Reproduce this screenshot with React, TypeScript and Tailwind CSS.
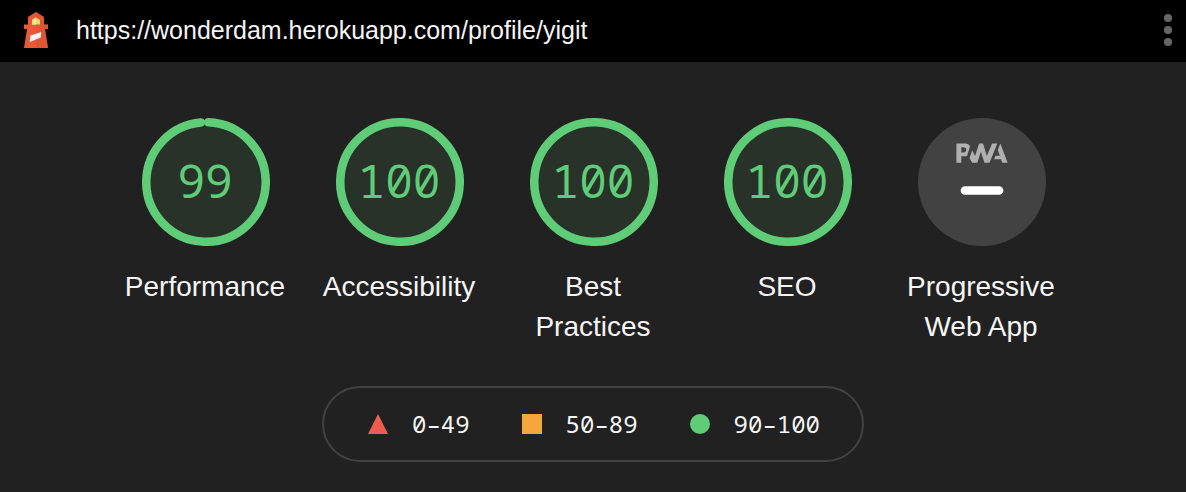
import React from "react";

type Category = { label: string; score: number };

const categories: Category[] = [
  { label: "Performance", score: 99 },
  { label: "Accessibility", score: 100 },
  { label: "Best Practices", score: 100 },
  { label: "SEO", score: 100 },
];

const RADIUS = 56;
const CIRCUMFERENCE = 2 * Math.PI * RADIUS;

function LighthouseLogo() {
  return (
    <svg className="h-9 w-6 shrink-0" viewBox="0 0 24 36" aria-hidden="true">
      <path fill="#e8593a" d="M12 0l8 5v7.5h4V17h-3l3 19H0l3-19H0v-4.500h4V5z" />
      <path fill="#d4502f" fillOpacity="0.5" d="M12 0l8 5v7.500h4V17h-3l3 19H12z" />
      <path fill="#f4d567" d="M8 12.500V8l4-2.500L16 8v4.500z" />
      <path fill="#f7e58e" d="M8 12.500V8l4-2.500v7z" />
      <path fill="#f3f3f3" d="M6.500 23.500L17.300 20l-.6 5.600L5.700 30z" />
    </svg>
  );
}

function Gauge({ score }: { score: number }) {
  const arc = score >= 100 ? CIRCUMFERENCE : (score / 100) * CIRCUMFERENCE - 4;
  return (
    <div className="grid size-32 place-items-center font-['Noto_Sans_Mono','DejaVu_Sans_Mono',monospace]">
      <svg className="col-start-1 row-start-1 size-32" viewBox="0 0 120 120" aria-hidden="true">
        <circle cx="60" cy="60" r={RADIUS} fill="#293229" />
        <circle
          cx="60"
          cy="60"
          r={RADIUS}
          fill="none"
          stroke="#5fcc78"
          strokeWidth="8"
          strokeLinecap="round"
          strokeDasharray={`${arc} ${CIRCUMFERENCE}`}
          transform="rotate(-87.900 60 60)"
        />
      </svg>
      <span className="col-start-1 row-start-1 pr-0.5 pb-1 text-[46px] leading-none text-[#5fcc78]">{score}</span>
    </div>
  );
}

function PwaBadge() {
  return (
    <svg className="size-32" viewBox="0 0 60 60" aria-hidden="true">
      <circle cx="30" cy="30" r="30" fill="#424242" />
      <g fill="#b0b0b0">
        <path d="M35.66 19.39l.7-1.75h2L37.4 15 38.6 12l3.4 9h-2.51l-.58-1.61z" />
        <path d="M33.52 21l3.65-9h-2.42l-2.5 5.82L30.5 12h-1.86l-1.9 5.82-1.35-2.65-1.21 3.72L25.4 21h2.38l1.72-5.2 1.64 5.2z" />
        <path
          fillRule="evenodd"
          d="M20.3 17.91h1.48c.45 0 .85-.05 1.2-.15l.39-1.18 1.07-3.3a2.64 2.64 0 0 0-.28-.37c-.55-.6-1.36-.91-2.42-.91H18v9h2.3V17.9zm1.96-3.84c.22.22.33.5.33.87 0 .36-.1.65-.29.87-.2.23-.59.35-1.15.35h-.86v-2.41h.87c.52 0 .89.1 1.1.32z"
        />
      </g>
      <rect x="20" y="32" width="20" height="4" rx="2" fill="#fff" />
    </svg>
  );
}

function Column({ label, children }: { label: string; children: React.ReactNode }) {
  return (
    <a href="#" className="flex w-40 flex-col items-center gap-[21px]">
      <div className="flex pl-0.5">{children}</div>
      <span className="text-center text-[28px] leading-10">{label}</span>
    </a>
  );
}

function LegendItem({ range, children }: { range: string; children: React.ReactNode }) {
  return (
    <li className="flex items-center gap-6">
      <svg className="size-5" viewBox="0 0 20 20" aria-hidden="true">
        {children}
      </svg>
      <span>{range}</span>
    </li>
  );
}

export default function App() {
  return (
    <div className="min-h-screen bg-[#212121] pb-[30px] font-['Liberation_Sans',sans-serif] text-[#f5f5f5]">
      <header className="flex items-center bg-black pt-[11px] pr-[14px] pb-[13px] pl-6">
        <LighthouseLogo />
        <a href="#" className="ml-7 flex-1 text-[25px] leading-[38px]">
          https://wonderdam.herokuapp.com/profile/yigit
        </a>
        <button type="button" aria-label="Tools menu">
          <svg className="h-8 w-2" viewBox="0 0 8 32" fill="#666" aria-hidden="true">
            <circle cx="4" cy="4" r="4" />
            <circle cx="4" cy="16" r="4" />
            <circle cx="4" cy="28" r="4" />
          </svg>
        </button>
      </header>
      <main className="flex flex-col items-center gap-[39px] pt-14">
        <div className="flex flex-wrap justify-center gap-[34px]">
          {categories.map((c) => (
            <Column key={c.label} label={c.label}>
              <Gauge score={c.score} />
            </Column>
          ))}
          <Column label="Progressive Web App">
            <PwaBadge />
          </Column>
        </div>
        <ul className="flex h-[76px] items-center gap-[52px] rounded-full border-2 border-[#424242] pr-[42px] pl-11 font-['Noto_Sans_Mono','DejaVu_Sans_Mono',monospace] text-2xl">
          <LegendItem range="0–49">
            <path fill="#ee5c4d" d="M10 0l10 20H0z" />
          </LegendItem>
          <LegendItem range="50–89">
            <rect width="20" height="20" fill="#f4a73c" />
          </LegendItem>
          <LegendItem range="90–100">
            <circle cx="10" cy="10" r="10" fill="#5fcc78" />
          </LegendItem>
        </ul>
      </main>
    </div>
  );
}
